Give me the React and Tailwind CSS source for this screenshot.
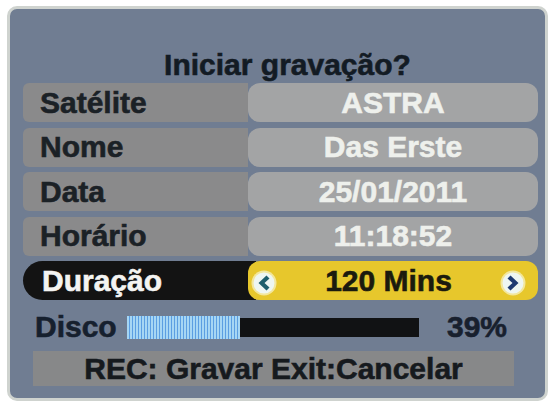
import React from "react";

const font = { fontFamily: '"Liberation Sans", Arial, sans-serif' };

function Row({ label, value }) {
  return (
    <div className="flex h-[39px] items-stretch">
      <div className="flex w-[225px] items-center rounded-l-[6px] bg-[#8a8a8b] pl-[17px] text-[30px] font-bold leading-none text-[#1b2126]">
        {label}
      </div>
      <div className="flex w-[290px] items-center justify-center rounded-[12px] bg-[#a3a4a5] text-[30px] font-bold leading-none text-[#eef0ec]">
        {value}
      </div>
    </div>
  );
}

function Arrow({ dir }) {
  return (
    <svg width="26" height="26" viewBox="0 0 26 26">
      <circle cx="13" cy="13" r="12.5" fill="#fbfbe8" opacity="0.6" />
      <circle cx="13" cy="13" r="10.5" fill="#eef6f2" />
      {dir === "left" ? (
        <polygon points="15.5,5.5 7.5,13 15.5,20.5 18.5,17.5 13.5,13 18.5,8.5" fill="#1f5f6c" />
      ) : (
        <polygon points="10.5,5.5 18.5,13 10.5,20.5 7.5,17.5 12.5,13 7.5,8.5" fill="#1e3a70" />
      )}
    </svg>
  );
}

export default function App() {
  return (
    <div className="h-[406px] w-[554px] bg-white [-webkit-text-stroke:0.6px]" style={font}>
      <div className="ml-[7px] pt-[6px]">
        <div className="h-[395px] w-[541px] rounded-[10px] border-[3px] border-[#cfd3cf] bg-[#707d92] pl-[13px] pr-[7px] pt-[39px]">
          <div className="flex h-[34px] items-center justify-center pl-[14px] text-[30px] font-bold leading-none text-[#131b24]">
            Iniciar gravação?
          </div>
          <div className="mt-[1px] flex flex-col gap-[5.5px]">
            <Row label="Satélite" value="ASTRA" />
            <Row label="Nome" value="Das Erste" />
            <Row label="Data" value="25/01/2011" />
            <Row label="Horário" value="11:18:52" />
            <div className="flex h-[39px] items-stretch">
              <div className="mr-[-8px] flex w-[233px] items-center rounded-l-[20px] bg-[#131313] pl-[19px] text-[30px] font-bold leading-none text-[#f4f4f2]">
                Duração
              </div>
              <div className="relative flex w-[290px] items-center justify-between rounded-[12px] bg-[#e7c72c] pl-[3px] pr-[12px] pt-[4px]">
                <Arrow dir="left" />
                <span className="-mt-[4px] text-[30px] font-bold leading-none text-[#1b1a0e]">120 Mins</span>
                <Arrow dir="right" />
              </div>
            </div>
          </div>
          <div className="mt-[12px] flex h-[30px] items-center">
            <span className="ml-[12px] w-[92px] text-[30px] font-bold leading-none text-[#16202e]">Disco</span>
            <div className="flex h-[19px] w-[292px] items-center bg-[#111214]">
              <div
                className="h-[23px] bg-[repeating-linear-gradient(90deg,#a6d6f4_0px,#a6d6f4_2px,#5b9ee2_2px,#5b9ee2_3px)]"
                style={{ width: "113px" }}
              />
            </div>
            <span className="ml-[28px] text-[30px] font-bold leading-none text-[#18202e]">39%</span>
          </div>
          <div className="ml-[10px] mt-[9px] flex h-[35px] w-[481px] items-center justify-center bg-[#878889] text-[30px] font-bold leading-none text-[#161a1e]">
            REC: Gravar Exit:Cancelar
          </div>
        </div>
      </div>
    </div>
  );
}
